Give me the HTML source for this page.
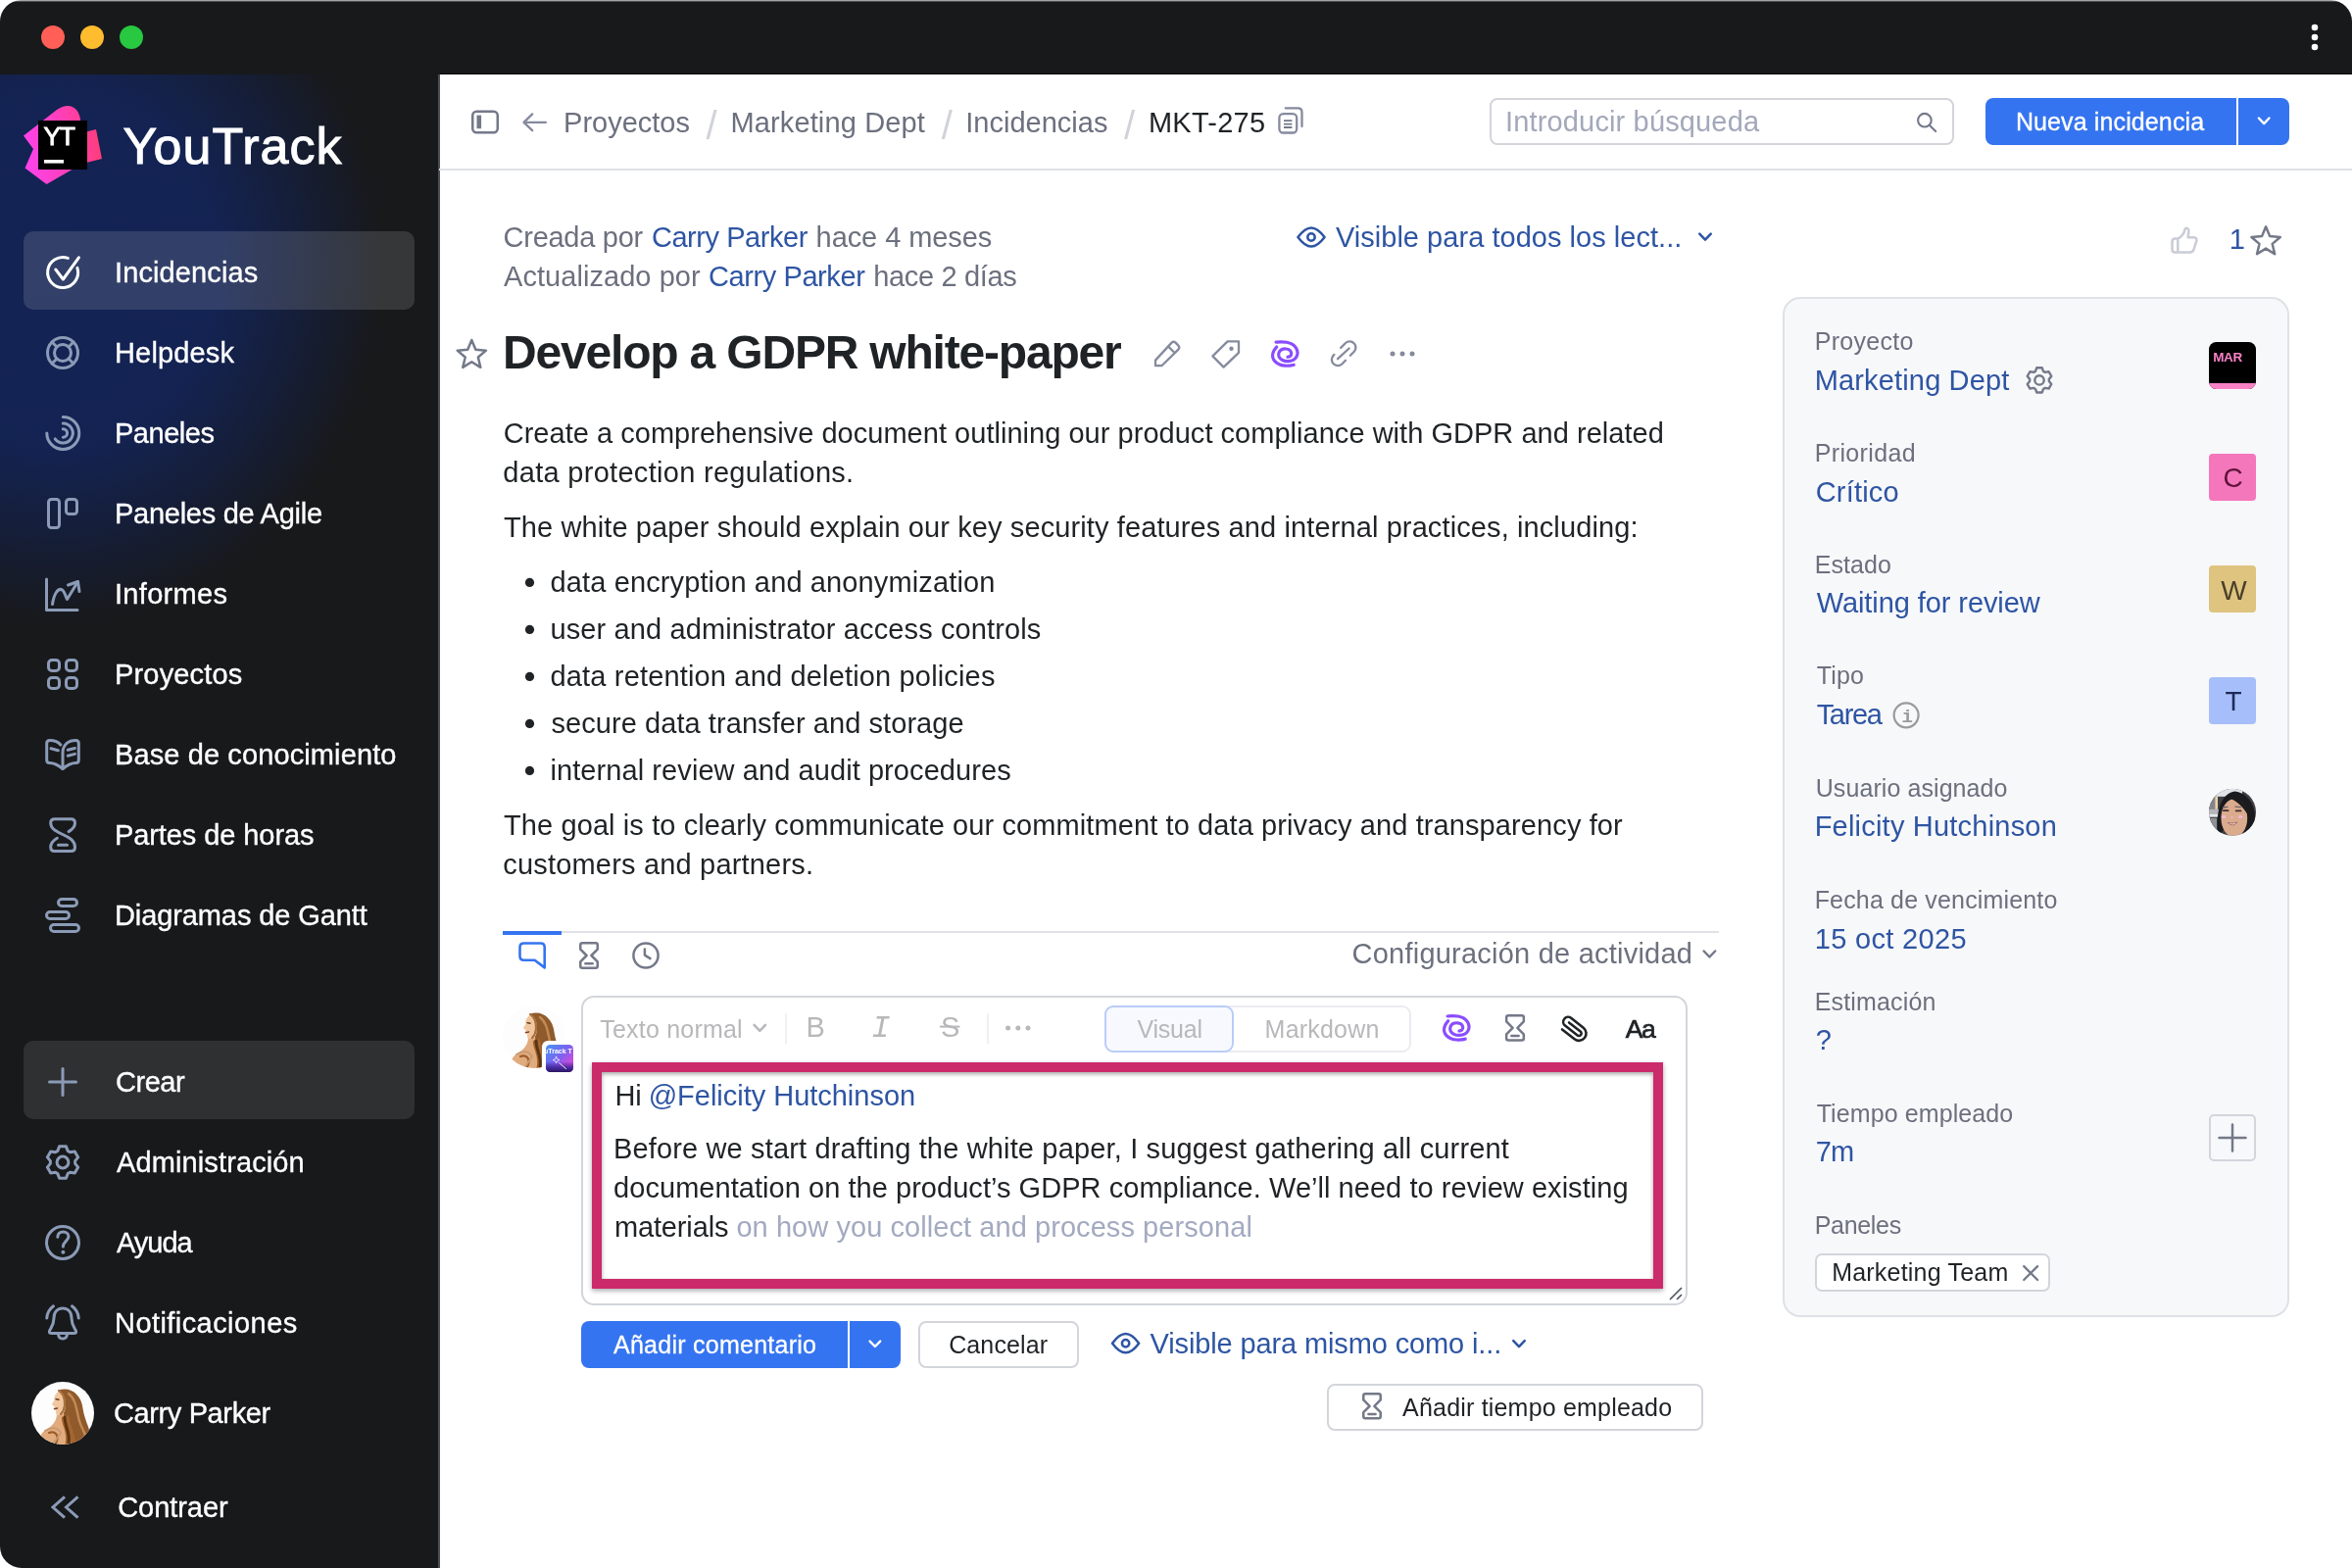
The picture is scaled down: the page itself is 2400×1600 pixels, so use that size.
<!DOCTYPE html>
<html lang="es">
<head>
<meta charset="utf-8">
<title>MKT-275 Develop a GDPR white-paper — YouTrack</title>
<style>
*{box-sizing:border-box;margin:0;padding:0}
html,body{width:2400px;height:1600px;overflow:hidden;background:#fff}
body{font-family:"Liberation Sans",Arial,sans-serif;position:relative;color:#1f2326}
.abs{position:absolute}
.txt{position:absolute;left:0;top:0;width:2400px;height:1600px;will-change:transform}
.t{position:absolute;white-space:nowrap;line-height:1;display:block}
svg{position:absolute;overflow:visible}
.win{position:absolute;left:0;top:0;width:2400px;height:1600px;border-radius:22px 22px 22px 22px;overflow:hidden;background:#fff}
.titlebar{position:absolute;left:0;top:0;width:2400px;height:76px;background:linear-gradient(to bottom,#a3a4a6 0,#a3a4a6 1px,#4d4e50 1px,#4d4e50 2px,#18191b 2px)}
.tl{position:absolute;top:26px;width:24px;height:24px;border-radius:50%}
.side{position:absolute;left:0;top:76px;width:448px;height:1524px;background:#18191b;overflow:hidden}
.sidegrad{position:absolute;left:0;top:0;width:448px;height:900px;background:radial-gradient(ellipse 335px 365px at 55px 196px,rgba(19,35,84,1) 0%,rgba(19,35,84,.97) 50%,rgba(19,35,84,.5) 76%,rgba(19,35,84,0) 100%)}
.sideedge{position:absolute;left:447px;top:76px;width:2px;height:1524px;background:#4c4e55}
.navsel{position:absolute;left:24px;width:399px;height:80px;border-radius:10px}
.hdrline{position:absolute;left:448px;top:172px;width:1952px;height:2px;background:#dfe1e6}
.btn{position:absolute;border-radius:8px}
.blue{background:#3574f0}
.obtn{position:absolute;border:2px solid #d3d5db;border-radius:8px;background:#fff}
a{color:#2e55a3;text-decoration:none}
</style>
</head>
<body>
<div class="win">
<!-- window title bar -->
<div class="titlebar"></div>
<div class="tl" style="left:42px;background:#ff5f57"></div>
<div class="tl" style="left:82px;background:#febc2e"></div>
<div class="tl" style="left:122px;background:#28c840"></div>
<svg style="left:2352px;top:20px" width="20" height="36" viewBox="0 0 20 36"><circle cx="10" cy="8" r="3.3" fill="#fff"/><circle cx="10" cy="18" r="3.3" fill="#fff"/><circle cx="10" cy="28" r="3.3" fill="#fff"/></svg>

<!-- sidebar -->
<div class="side"><div class="sidegrad"></div></div>
<div class="sideedge"></div>
<div class="navsel" style="top:236px;background:rgba(255,255,255,.135)"></div>
<div class="navsel" style="top:1062px;background:rgba(255,255,255,.1)"></div>

<!-- logo -->
<svg style="left:20px;top:100px" width="92" height="96" viewBox="20 100 92 96">
  <defs><linearGradient id="lg1" x1="24" y1="150" x2="104" y2="140" gradientUnits="userSpaceOnUse"><stop offset="0" stop-color="#fb43ec"/><stop offset=".55" stop-color="#ff3fb4"/><stop offset="1" stop-color="#ff3d78"/></linearGradient></defs>
  <path d="M24 138.5 L58 112 Q70 104 78 112 Q83 118 82 128 L82 136 L98 132 L104 162 L84 167 L47.5 188 L25.5 171.5 L34 152 Z" fill="url(#lg1)"/>
  <rect x="39" y="123" width="50" height="50" fill="#000"/>
  <rect x="45" y="163" width="20" height="3.6" fill="#fff"/>
</svg>
<!-- header -->
<div class="abs" style="left:449px;top:75px;width:1951px;height:1px;background:#08090a"></div>
<div class="hdrline"></div>
<div class="abs" style="left:1520px;top:100px;width:474px;height:48px;border:2px solid #d3d5db;border-radius:8px;background:#fff"></div>
<div class="btn blue" style="left:2026px;top:100px;width:256px;height:48px;border-radius:8px 0 0 8px"></div>
<div class="btn blue" style="left:2284px;top:100px;width:52px;height:48px;border-radius:0 8px 8px 0"></div>

<!-- right panel -->
<div class="abs" style="left:1819px;top:303px;width:517px;height:1041px;border:2px solid #dfe1e6;border-radius:18px;background:#f7f8fa"></div>
<div class="abs" style="left:2254px;top:349px;width:48px;height:48px;border-radius:7.5px;background:#000;overflow:hidden"><div class="abs" style="left:0;top:42px;width:48px;height:6px;background:#fb81c5"></div></div>
<div class="abs" style="left:2254px;top:463px;width:48px;height:48px;border-radius:4px;background:#f476bb"></div>
<div class="abs" style="left:2254px;top:577px;width:48px;height:48px;border-radius:4px;background:#dfc47f"></div>
<div class="abs" style="left:2254px;top:691px;width:48px;height:48px;border-radius:4px;background:#a6bef9"></div>
<div class="abs" style="left:2254px;top:1137px;width:48px;height:48px;border:2px solid #d3d5db;border-radius:5px;background:#f7f8fa"></div>
<div class="abs" style="left:1852px;top:1279px;width:240px;height:39px;border:2px solid #d3d5db;border-radius:7px;background:#fff"></div>

<!-- activity -->
<div class="abs" style="left:513px;top:950px;width:1241px;height:2px;background:#dfe1e6"></div>
<div class="abs" style="left:513px;top:950px;width:60px;height:4px;background:#3574f0"></div>

<!-- editor -->
<div class="abs" style="left:593px;top:1016px;width:1129px;height:316px;border:2px solid #d3d5db;border-radius:13px;background:#fff"></div>
<div class="abs" style="left:801px;top:1034px;width:2px;height:31px;background:#eff0f3"></div>
<div class="abs" style="left:1007px;top:1034px;width:2px;height:31px;background:#eff0f3"></div>
<div class="abs" style="left:1127px;top:1026px;width:313px;height:48px;border:2px solid #ebecf0;border-radius:9px;background:#fff"></div>
<div class="abs" style="left:1127px;top:1026px;width:132px;height:48px;border:2px solid #b9cdf9;border-radius:9px;background:#f7f9ff"></div>
<div class="abs" style="left:604px;top:1084px;width:1093px;height:231px;border:10px solid #cc2b6b;box-shadow:0 2px 5px rgba(0,0,0,.34), inset 0 2px 4px rgba(0,0,0,.36);background:#fff"></div>

<!-- buttons -->
<div class="btn blue" style="left:593px;top:1348px;width:272px;height:48px;border-radius:8px 0 0 8px"></div>
<div class="btn blue" style="left:867px;top:1348px;width:52px;height:48px;border-radius:0 8px 8px 0"></div>
<div class="obtn" style="left:937px;top:1348px;width:164px;height:48px"></div>
<div class="obtn" style="left:1354px;top:1412px;width:384px;height:48px"></div>
<svg style="left:0;top:0" width="460" height="1600" viewBox="0 0 460 1600" fill="none" stroke="#8b9bb7" stroke-width="3" stroke-linecap="round" stroke-linejoin="round">
<g stroke="#fff"><path d="M69.3 263.4 A15.5 15.5 0 1 0 78.9 273.4"/><path d="M56.8 275 L64.4 285 L80.4 262.8"/></g>
<circle cx="64" cy="360" r="15.5"/><circle cx="64" cy="360" r="8.5"/>
<path d="M70.00 366.00 L74.96 370.96"/>
<path d="M70.00 354.00 L74.96 349.04"/>
<path d="M58.00 366.00 L53.04 370.96"/>
<path d="M58.00 354.00 L53.04 349.04"/>
<path d="M64.3 425.5 A16.5 16.5 0 1 1 47.8 442"/><path d="M64.3 432 A10 10 0 1 1 56.2 447.9"/><path d="M64.3 437.7 A4.3 4.3 0 0 1 64.3 446.3" />
<rect x="49.5" y="509.5" width="11" height="29" rx="3"/><rect x="67.5" y="509.5" width="11" height="15" rx="3"/>
<path d="M47.5 591 V622.5 H79"/><path d="M53.5 616.5 C55 606 59 600.5 62.5 601.5 C66 602.5 66.5 608 68.5 611.5 L79.5 593.5"/><path d="M69.5 597 L79.5 593.5 L81 603.5"/>
<rect x="49.5" y="673.5" width="11" height="11" rx="3.5"/>
<rect x="49.5" y="691.5" width="11" height="11" rx="3.5"/>
<rect x="67.5" y="673.5" width="11" height="11" rx="3.5"/>
<rect x="67.5" y="691.5" width="11" height="11" rx="3.5"/>
<path d="M64 784.5 C58 779.5 53 778.5 50.7 778.5 Q47.7 778.5 47.7 775.5 V758.5 Q47.7 755.5 50.7 755.5 C55.5 755.5 59.5 757 61.8 760"/>
<path d="M64 784.5 C70 779.5 75 778.5 77.3 778.5 Q80.3 778.5 80.3 775.5 V758.5 Q80.3 755.5 77.3 755.5 C70 755.5 64 759.5 64 768 V784.5"/>
<path d="M52 763.8 L59.3 765.8 M69.2 765.3 L76.4 763.5 M69.2 771.2 L76.4 769.4"/>
<path d="M76.5 864.5 C76.5 857 70 854.5 64 851.5 C58 848.5 51.7 846 51.7 839.7 Q51.7 835.7 55.7 835.7 H72.5 Q76.5 835.7 76.5 839.7 C76.5 844 73.5 846.5 70 848.6"/>
<path d="M76.5 864.5 Q76.5 868.5 72.5 868.5 H55.7 Q51.7 868.5 51.7 864.5 C51.7 860 54.5 857.5 58.3 855.3"/><path d="M59.5 862.3 H68.5"/>
<rect x="59.5" y="917.5" width="19" height="7" rx="3.5"/><rect x="47.5" y="930.5" width="23" height="7" rx="3.5"/><rect x="51.5" y="943.5" width="29" height="7" rx="3.5"/>
<path d="M64 1090.5 V1117.5 M50.5 1104 H77.5"/>
<path d="M60.57 1169.86 L67.43 1169.86 L69.17 1174.40 L71.46 1175.73 L76.26 1174.96 L79.69 1180.90 L76.63 1184.67 L76.63 1187.33 L79.69 1191.10 L76.26 1197.04 L71.46 1196.27 L69.17 1197.60 L67.43 1202.14 L60.57 1202.14 L58.83 1197.60 L56.54 1196.27 L51.74 1197.04 L48.31 1191.10 L51.37 1187.33 L51.37 1184.67 L48.31 1180.90 L51.74 1174.96 L56.54 1175.73 L58.83 1174.40 Z"/><circle cx="64" cy="1186" r="5.9"/>
<circle cx="64" cy="1268" r="16.5"/><path d="M58.8 1262.3 C58.8 1258.5 61.5 1256.9 64.4 1256.9 C67.6 1256.9 70 1258.9 70 1261.8 C70 1266 64.4 1267 64.4 1272"/><circle cx="64.4" cy="1277.8" r="2" fill="#8b9bb7" stroke="none"/>
<path d="M55 1345 C55 1338.5 59 1335 64 1335 C69 1335 73 1338.5 73 1345 C73 1351 75 1353.5 77 1357 Q79 1360.5 75.5 1360.5 H52.5 Q49 1360.5 51 1357 C53 1353.5 55 1351 55 1345 Z"/>
<path d="M59.5 1361.5 C60 1367.5 68 1367.5 68.5 1361.5"/><path d="M54.5 1332.8 C50.5 1335.8 48 1340 47.8 1345"/><path d="M73.5 1332.8 C77.5 1335.8 80 1340 80.2 1345"/>
<path stroke-linecap="butt" stroke-linejoin="miter" d="M66 1527.3 L54 1538 L66 1548.7 M79.5 1527.3 L67.5 1538 L79.5 1548.7"/>
</svg>
<svg style="left:0;top:0" width="2400" height="1600" viewBox="0 0 2400 1600" fill="none" stroke-linecap="round" stroke-linejoin="round">
<rect x="482.25" y="113.75" width="25.5" height="21.5" rx="4" stroke="#747989" stroke-width="2.5"/><rect x="486.5" y="117.6" width="4.6" height="13.6" fill="#747989"/>
<path d="M557 124.8 H534.8 M543.2 116.4 L534.5 124.8 L543.2 133.2" stroke="#858a9d" stroke-width="2.3"/>
<rect x="1305.4" y="116.2" width="17.8" height="19.3" rx="4" stroke="#858a9d" stroke-width="2.3"/>
<path d="M1311.8 110.4 H1324.5 Q1328.5 110.4 1328.5 114.4 V129" stroke="#858a9d" stroke-width="2.3"/>
<path d="M1310 123.2 H1318.4 M1310 126.6 H1318.4 M1310 130 H1318.4" stroke="#747989" stroke-width="1.8" stroke-linecap="butt"/>
<circle cx="1963.9" cy="122.7" r="6.8" stroke="#747989" stroke-width="2.1"/><path d="M1968.8 127.7 L1975.2 134" stroke="#747989" stroke-width="2.1"/>
<path d="M2304.90 120.50 L2310.20 126.10 L2315.50 120.50" stroke="#fff" stroke-width="2.4"/>
<path d="M887.60 1368.60 L892.90 1374.00 L898.20 1368.60" stroke="#fff" stroke-width="2.4"/>
<path d="M1324.40 242.00 C1329.57 235.09 1333.92 232.40 1338.00 232.40 C1342.08 232.40 1346.43 235.09 1351.60 242.00 C1346.43 248.91 1342.08 251.60 1338.00 251.60 C1333.92 251.60 1329.57 248.91 1324.40 242.00 Z" stroke="#2e55a3" stroke-width="2.5"/><circle cx="1338.00" cy="242.00" r="3.7" stroke="#2e55a3" stroke-width="2.5"/>
<path d="M1734.25 238.60 L1740.00 244.60 L1745.75 238.60" stroke="#2e55a3" stroke-width="2.5"/>
<path d="M1135.00 1370.70 C1140.17 1363.79 1144.52 1361.10 1148.60 1361.10 C1152.68 1361.10 1157.03 1363.79 1162.20 1370.70 C1157.03 1377.61 1152.68 1380.30 1148.60 1380.30 C1144.52 1380.30 1140.17 1377.61 1135.00 1370.70 Z" stroke="#2e55a3" stroke-width="2.5"/><circle cx="1148.60" cy="1370.70" r="3.7" stroke="#2e55a3" stroke-width="2.5"/>
<path d="M1544.25 1368.20 L1550.00 1374.20 L1555.75 1368.20" stroke="#2e55a3" stroke-width="2.5"/>
<path d="M2222.3 243.6 C2226.5 241 2228.8 237.6 2229.4 234.4 Q2229.9 232.6 2231.6 232.9 Q2233.6 233.4 2233.4 236.2 L2232.6 242.2 H2238.6 Q2242 242.4 2241.3 245.8 L2238.6 254.4 Q2237.6 257.5 2234.4 257.5 H2219.6 Q2216.5 257.5 2216.5 254.4 V246.7 Q2216.5 243.6 2219.6 243.6 Z M2222.3 243.6 V257.5" stroke="#c9ccd6" stroke-width="2.5"/>
<path d="M2312.10 231.30 L2316.16 241.12 L2326.75 241.94 L2318.66 248.83 L2321.15 259.16 L2312.10 253.60 L2303.05 259.16 L2305.54 248.83 L2297.45 241.94 L2308.04 241.12 Z" stroke="#747989" stroke-width="2.5" stroke-linejoin="round"/>
<path d="M481.30 347.00 L485.36 356.82 L495.95 357.64 L487.86 364.53 L490.35 374.86 L481.30 369.30 L472.25 374.86 L474.74 364.53 L466.65 357.64 L477.24 356.82 Z" stroke="#747989" stroke-width="2.5" stroke-linejoin="round"/>
<path d="M1179 373.2 V367.6 L1195.6 349.6 Q1197.6 347.8 1199.6 349.6 L1202.4 352.6 Q1204.2 354.6 1202.4 356.6 L1185.4 373.2 Z M1192 353.4 L1198.6 360" stroke="#858a9d" stroke-width="2.3"/>
<path d="M1252.6 348.4 H1264 V359.8 L1248.6 374.6 L1237.4 363.4 Z" stroke="#858a9d" stroke-width="2.3"/><circle cx="1256.5" cy="355.8" r="2.2" fill="#858a9d"/>
<path d="M1302.07 349.20 C1302.94 349.14 1305.48 348.83 1307.28 348.83 C1309.08 348.83 1311.00 348.82 1312.86 349.20 C1314.72 349.59 1316.83 350.16 1318.44 351.16 C1320.05 352.15 1321.60 353.70 1322.53 355.15 C1323.46 356.61 1323.96 358.39 1324.02 359.90 C1324.08 361.40 1323.63 362.94 1322.90 364.18 C1322.18 365.42 1321.09 366.61 1319.65 367.34 C1318.21 368.07 1316.08 368.52 1314.26 368.55 C1312.43 368.58 1310.19 368.25 1308.67 367.52 C1307.16 366.80 1305.75 365.48 1305.14 364.18 C1304.54 362.87 1304.63 360.95 1305.05 359.71 C1305.47 358.47 1306.47 357.36 1307.65 356.74 C1308.83 356.12 1310.72 355.90 1312.12 355.99 C1313.51 356.08 1315.09 356.55 1316.02 357.29 C1316.95 358.04 1317.60 359.43 1317.70 360.46 C1317.79 361.48 1317.20 362.81 1316.58 363.43 C1315.96 364.05 1314.41 364.05 1313.98 364.18" stroke="#8a4dff" stroke-width="3.2"/><path d="M1302.72 353.95 C1302.24 354.61 1300.54 356.46 1299.84 357.94 C1299.14 359.43 1298.57 361.35 1298.54 362.87 C1298.51 364.39 1298.96 365.82 1299.65 367.06 C1300.35 368.30 1301.53 369.43 1302.72 370.31 C1303.92 371.20 1305.36 371.88 1306.82 372.36 C1308.27 372.84 1309.91 373.07 1311.46 373.20 C1313.01 373.32 1314.66 373.24 1316.12 373.10 C1317.57 372.96 1319.53 372.48 1320.21 372.36" stroke="#8a4dff" stroke-width="3.2"/>
<path d="M1477.07 1037.00 C1477.94 1036.94 1480.48 1036.63 1482.28 1036.63 C1484.08 1036.63 1486.00 1036.62 1487.86 1037.00 C1489.72 1037.39 1491.83 1037.96 1493.44 1038.96 C1495.05 1039.95 1496.60 1041.50 1497.53 1042.95 C1498.46 1044.41 1498.96 1046.19 1499.02 1047.70 C1499.08 1049.20 1498.63 1050.74 1497.90 1051.98 C1497.18 1053.22 1496.09 1054.41 1494.65 1055.14 C1493.21 1055.87 1491.08 1056.32 1489.26 1056.35 C1487.43 1056.38 1485.19 1056.05 1483.67 1055.32 C1482.16 1054.60 1480.75 1053.28 1480.14 1051.98 C1479.54 1050.67 1479.63 1048.75 1480.05 1047.51 C1480.47 1046.27 1481.47 1045.16 1482.65 1044.54 C1483.83 1043.92 1485.72 1043.70 1487.12 1043.79 C1488.51 1043.88 1490.09 1044.35 1491.02 1045.09 C1491.95 1045.84 1492.60 1047.23 1492.70 1048.26 C1492.79 1049.28 1492.20 1050.61 1491.58 1051.23 C1490.96 1051.85 1489.41 1051.85 1488.98 1051.98" stroke="#8a4dff" stroke-width="3.2"/><path d="M1477.72 1041.75 C1477.24 1042.41 1475.54 1044.26 1474.84 1045.74 C1474.14 1047.23 1473.57 1049.15 1473.54 1050.67 C1473.51 1052.19 1473.96 1053.62 1474.65 1054.86 C1475.35 1056.10 1476.53 1057.23 1477.72 1058.11 C1478.92 1059.00 1480.36 1059.68 1481.82 1060.16 C1483.27 1060.64 1484.91 1060.87 1486.46 1061.00 C1488.01 1061.12 1489.66 1061.04 1491.12 1060.90 C1492.57 1060.76 1494.53 1060.28 1495.21 1060.16" stroke="#8a4dff" stroke-width="3.2"/>
<path d="M1368.21 354.82 L1373.02 350.02 A6.20 6.20 0 0 1 1381.78 358.78 L1377.82 362.74" stroke="#858a9d" stroke-width="2.3"/>
<path d="M1361.36 361.87 L1360.52 362.72 A6.20 6.20 0 0 0 1369.28 371.48 L1372.96 367.81" stroke="#858a9d" stroke-width="2.3"/>
<path d="M1365 366.2 L1376.6 355.5" stroke="#858a9d" stroke-width="2.3"/>
<circle cx="1421" cy="361" r="2.5" fill="#858a9d"/>
<circle cx="1431" cy="361" r="2.5" fill="#858a9d"/>
<circle cx="1441" cy="361" r="2.5" fill="#858a9d"/>
<circle cx="540.5" cy="594.4" r="4.6" fill="#1f2326"/>
<circle cx="540.5" cy="642.4" r="4.6" fill="#1f2326"/>
<circle cx="540.5" cy="690.4" r="4.6" fill="#1f2326"/>
<circle cx="540.5" cy="738.4" r="4.6" fill="#1f2326"/>
<circle cx="540.5" cy="786.4" r="4.6" fill="#1f2326"/>
<path d="M534.5 962.5 H551.7 Q555.7 962.5 555.7 966.5 V987.4 L545.6 979.7 H534.5 Q530.5 979.7 530.5 975.7 V966.5 Q530.5 962.5 534.5 962.5 Z" stroke="#3574f0" stroke-width="2.6"/>
<path d="M594.25 962.35 H607.75 Q609.75 962.35 609.75 964.35 V968.55 L603.40 975.00 L609.75 981.45 V985.65 Q609.75 987.65 607.75 987.65 H594.25 Q592.25 987.65 592.25 985.65 V981.45 L598.60 975.00 L592.25 968.55 V964.35 Q592.25 962.35 594.25 962.35 Z" stroke="#747989" stroke-width="2.5" stroke-linejoin="round"/><path d="M597.40 983.25 H604.60" stroke="#747989" stroke-width="2.5"/>
<circle cx="659" cy="975" r="12.6" stroke="#747989" stroke-width="2.5"/><path d="M657.9 968.6 V974.6 L663.5 978.1" stroke="#747989" stroke-width="2.5"/>
<path d="M1738.65 970.50 L1744.40 976.50 L1750.15 970.50" stroke="#747989" stroke-width="2.5"/>
<path d="M769.55 1045.80 L775.30 1051.80 L781.05 1045.80" stroke="#b8b8bb" stroke-width="2.5"/>
<path d="M959 1047.6 H979.4" stroke="#b8b8bb" stroke-width="2" stroke-linecap="butt"/>
<circle cx="1028.6" cy="1049" r="2.5" fill="#b8b8bb"/>
<circle cx="1038.8" cy="1049" r="2.5" fill="#b8b8bb"/>
<circle cx="1049" cy="1049" r="2.5" fill="#b8b8bb"/>
<path d="M1539.15 1036.25 H1552.85 Q1554.85 1036.25 1554.85 1038.25 V1042.42 L1548.40 1048.85 L1554.85 1055.28 V1059.45 Q1554.85 1061.45 1552.85 1061.45 H1539.15 Q1537.15 1061.45 1537.15 1059.45 V1055.28 L1543.60 1048.85 L1537.15 1042.42 V1038.25 Q1537.15 1036.25 1539.15 1036.25 Z" stroke="#747989" stroke-width="2.5" stroke-linejoin="round"/><path d="M1542.40 1057.05 H1549.60" stroke="#747989" stroke-width="2.5"/>
<g transform="translate(1606,1049.8) rotate(-7) scale(-1.23,1.23) translate(-11.7,-11.7)"><path d="M21.44 11.05l-9.19 9.19a6 6 0 0 1-8.49-8.49l9.19-9.19a4 4 0 0 1 5.66 5.66l-9.2 9.19a2 2 0 0 1-2.83-2.83l8.49-8.48" stroke="#1f2326" stroke-width="2.1"/></g>
<path d="M1704 1326 L1716 1314 M1711 1326 L1716 1321" stroke="#4d5160" stroke-width="1.6" stroke-linecap="butt"/>
<path d="M1393.25 1422.35 H1406.75 Q1408.75 1422.35 1408.75 1424.35 V1428.47 L1402.40 1434.85 L1408.75 1441.22 V1445.35 Q1408.75 1447.35 1406.75 1447.35 H1393.25 Q1391.25 1447.35 1391.25 1445.35 V1441.22 L1397.60 1434.85 L1391.25 1428.47 V1424.35 Q1391.25 1422.35 1393.25 1422.35 Z" stroke="#747989" stroke-width="2.5" stroke-linejoin="round"/><path d="M1396.40 1442.95 H1403.60" stroke="#747989" stroke-width="2.5"/>
<path d="M2078.32 375.28 L2083.68 375.28 L2085.03 378.86 L2086.82 379.89 L2090.59 379.27 L2093.27 383.91 L2090.85 386.87 L2090.85 388.93 L2093.27 391.89 L2090.59 396.53 L2086.82 395.91 L2085.03 396.94 L2083.68 400.52 L2078.32 400.52 L2076.97 396.94 L2075.18 395.91 L2071.41 396.53 L2068.73 391.89 L2071.15 388.93 L2071.15 386.87 L2068.73 383.91 L2071.41 379.27 L2075.18 379.89 L2076.97 378.86 Z" stroke="#747989" stroke-width="2.4"/><circle cx="2081" cy="387.9" r="4.7" stroke="#747989" stroke-width="2.4"/>
<circle cx="1945.1" cy="729.8" r="12.5" stroke="#9a9a9a" stroke-width="2.2"/>
<path d="M2278 1147.5 V1174.5 M2264.5 1161 H2291.5" stroke="#747989" stroke-width="2.5"/>
<path d="M2065.2 1292.1 L2079.1 1306 M2079.1 1292.1 L2065.2 1306" stroke="#747989" stroke-width="2.3"/>
<clipPath id="cp1"><circle cx="64" cy="1442" r="32"/></clipPath><g clip-path="url(#cp1)"><g transform="translate(0,0)"><rect x="30" y="1408" width="68" height="68" fill="#fdfdfe"/><path d="M58 1443 C58 1450 53 1456 44 1461 L36 1472 L46 1480 L84 1480 L86 1466 C76 1460 68 1452 67 1442 Z" fill="#e2ab7d"/><path d="M60 1418.5 C72 1414.5 83 1423 84.5 1437 C86 1448 91 1456 93 1466 L80 1476 L68 1472 C72 1462 66 1452 65 1442 C64.5 1432 64 1424 60 1418.5 Z" fill="#8f5a2c"/><path d="M70 1422 C78 1428 78 1440 81 1450 C83 1457 87 1462 88 1468" stroke="#c48a55" stroke-width="2.4" fill="none"/><path d="M63 1446 C62 1454 70 1460 66 1476 L78 1478 C78 1466 72 1456 70 1444 Z" fill="#a5652e"/><path d="M50 1462 C56 1460 60 1464 58 1470 C57 1474 54 1476 52 1480" stroke="#9a5c2a" stroke-width="2.2" fill="none"/><path d="M66 1446 C66 1456 72 1462 70 1472" stroke="#5c3514" stroke-width="3" fill="none"/><path d="M61.5 1419.5 C57 1420.5 54.8 1425 55.4 1429 L52.8 1433 L55.4 1435 L55 1438 L57 1439.6 L57.2 1443 C60 1445.4 64 1443.4 66 1440 C68.4 1432 66.4 1423 61.5 1419.5 Z" fill="#f1c7a0"/><path d="M60 1419 C64 1421 66.5 1427 66 1434 C65.6 1438 64 1441 62 1443" stroke="#a8703c" stroke-width="2.2" fill="none"/><path d="M57 1427.6 L60 1428.2" stroke="#5c3514" stroke-width="1.4"/><path d="M55.4 1437.6 L58.6 1437" stroke="#7a3b2a" stroke-width="1.4"/><path d="M46 1460 C52 1456 58 1456 62 1462 C58 1468 54 1474 50 1480" stroke="#c99a70" stroke-width="2" fill="none"/></g></g>
<clipPath id="cp2"><circle cx="545" cy="1058" r="32"/></clipPath><g clip-path="url(#cp2)"><g transform="translate(481,-384)"><rect x="30" y="1408" width="68" height="68" fill="#fdfdfe"/><path d="M58 1443 C58 1450 53 1456 44 1461 L36 1472 L46 1480 L84 1480 L86 1466 C76 1460 68 1452 67 1442 Z" fill="#e2ab7d"/><path d="M60 1418.5 C72 1414.5 83 1423 84.5 1437 C86 1448 91 1456 93 1466 L80 1476 L68 1472 C72 1462 66 1452 65 1442 C64.5 1432 64 1424 60 1418.5 Z" fill="#8f5a2c"/><path d="M70 1422 C78 1428 78 1440 81 1450 C83 1457 87 1462 88 1468" stroke="#c48a55" stroke-width="2.4" fill="none"/><path d="M63 1446 C62 1454 70 1460 66 1476 L78 1478 C78 1466 72 1456 70 1444 Z" fill="#a5652e"/><path d="M50 1462 C56 1460 60 1464 58 1470 C57 1474 54 1476 52 1480" stroke="#9a5c2a" stroke-width="2.2" fill="none"/><path d="M66 1446 C66 1456 72 1462 70 1472" stroke="#5c3514" stroke-width="3" fill="none"/><path d="M61.5 1419.5 C57 1420.5 54.8 1425 55.4 1429 L52.8 1433 L55.4 1435 L55 1438 L57 1439.6 L57.2 1443 C60 1445.4 64 1443.4 66 1440 C68.4 1432 66.4 1423 61.5 1419.5 Z" fill="#f1c7a0"/><path d="M60 1419 C64 1421 66.5 1427 66 1434 C65.6 1438 64 1441 62 1443" stroke="#a8703c" stroke-width="2.2" fill="none"/><path d="M57 1427.6 L60 1428.2" stroke="#5c3514" stroke-width="1.4"/><path d="M55.4 1437.6 L58.6 1437" stroke="#7a3b2a" stroke-width="1.4"/><path d="M46 1460 C52 1456 58 1456 62 1462 C58 1468 54 1474 50 1480" stroke="#c99a70" stroke-width="2" fill="none"/></g></g>
<defs><linearGradient id="bg1" x1="0" y1="0" x2="1" y2="0.9"><stop offset="0.05" stop-color="#4b90f3"/><stop offset="0.5" stop-color="#7b62f0"/><stop offset="0.8" stop-color="#c44fe0"/></linearGradient><linearGradient id="bg2" x1="0" y1="0" x2="0" y2="1"><stop offset="0.62" stop-color="#2b1a7e" stop-opacity="0"/><stop offset="0.85" stop-color="#3a2392" stop-opacity=".9"/><stop offset="1" stop-color="#2b165f"/></linearGradient></defs><rect x="553" y="1062" width="36" height="36" rx="6" fill="#fff"/><rect x="557" y="1066" width="28" height="28" rx="4.5" fill="url(#bg1)"/><rect x="557" y="1066" width="28" height="28" rx="4.5" fill="url(#bg2)"/><path d="M567.6 1078.2 L568.6 1080.6 L571.0 1081.6 L568.6 1082.6 L567.6 1085.0 L566.6 1082.6 L564.2 1081.6 L566.6 1080.6 Z" fill="none" stroke="#fff" stroke-width="0.7"/><path d="M570.6 1084.6 L577.6 1090.6" stroke="#fff" stroke-width="0.9"/>
<clipPath id="fel"><circle cx="2278" cy="828.8" r="24"/></clipPath><g clip-path="url(#fel)"><rect x="2254" y="804.8" width="48" height="48" fill="#3f4044"/><rect x="2254" y="804.8" width="34" height="8" fill="#e1e3e8"/><rect x="2254" y="812.8" width="8" height="15" fill="#85868a"/><rect x="2260.4" y="812.8" width="2.6" height="13" fill="#ecd2aa"/><rect x="2254" y="825.8" width="12" height="4.5" fill="#b4b6bb"/><rect x="2254" y="830.3" width="12" height="3.4" fill="#e6e8ec"/><rect x="2254" y="834.8" width="8" height="12" fill="#8f9094"/><path d="M2263.5 854.8 C2261.0 834.8 2263.0 810.8 2280.0 807.4 C2294.0 808.8 2303.0 822.8 2301.0 840.8 L2298.0 854.8 L2290.0 854.8 C2282.0 838.8 2272.0 838.8 2263.5 854.8 Z" fill="#1b1b1e"/><ellipse cx="2279.8" cy="834.8" rx="13.4" ry="19.5" fill="#dbab8e"/><path d="M2272.0 814.2 C2280.0 811.3 2290.0 814.8 2294.4 832.8 C2290.5 825.8 2285.0 818.8 2277.0 815.2 C2275.0 815.2 2273.0 814.8 2272.0 814.2 Z" fill="#1b1b1e"/><path d="M2273.0 814.2 C2269.0 816.8 2266.0 822.8 2265.6 831.8 L2267.6 822.8 Z" fill="#1b1b1e"/><path d="M2268.8 827.2 h4.8 M2281.6 827.4 h5" stroke="#3f3230" stroke-width="1.7" stroke-linecap="round"/><path d="M2268.4 824.0 l4.6 -0.6 M2281.0 823.2 l5.4 0.4" stroke="#6b6468" stroke-width="1.3"/><ellipse cx="2269.2" cy="833.4" rx="2.3" ry="1.6" fill="#f2b8d2"/><ellipse cx="2286.2" cy="833.4" rx="2.3" ry="1.6" fill="#f2b8d2"/><ellipse cx="2277.4" cy="834.1999999999999" rx="1.4" ry="0.9" fill="#efb3c8"/><path d="M2273.4 839.6 Q2278.0 841.0 2283.0 839.0 Q2278.4 844.8 2273.4 839.6 Z" fill="#eef0f0" stroke="#a5655c" stroke-width="0.9"/></g>
</svg>
<div class="txt">
<span class="t" style="left:44.50px;top:125.50px;font-size:26px;color:#ffffff;letter-spacing:-0.942px;-webkit-text-stroke:.9px #fff;">YT</span>
<span class="t" style="left:125.60px;top:122.60px;font-size:52px;color:#ffffff;letter-spacing:1.026px;-webkit-text-stroke:1px #fff;">YouTrack</span>
<span class="t" style="left:117.00px;top:263.50px;font-size:29px;color:#ffffff;letter-spacing:0.112px;-webkit-text-stroke:.35px #fff;">Incidencias</span>
<span class="t" style="left:117.00px;top:345.50px;font-size:29px;color:#ffffff;letter-spacing:0.157px;-webkit-text-stroke:.35px #fff;">Helpdesk</span>
<span class="t" style="left:117.00px;top:427.50px;font-size:29px;color:#ffffff;letter-spacing:-0.483px;-webkit-text-stroke:.35px #fff;">Paneles</span>
<span class="t" style="left:117.00px;top:509.50px;font-size:29px;color:#ffffff;letter-spacing:-0.268px;-webkit-text-stroke:.35px #fff;">Paneles de Agile</span>
<span class="t" style="left:117.00px;top:591.50px;font-size:29px;color:#ffffff;letter-spacing:0.312px;-webkit-text-stroke:.35px #fff;">Informes</span>
<span class="t" style="left:117.00px;top:673.50px;font-size:29px;color:#ffffff;letter-spacing:0.170px;-webkit-text-stroke:.35px #fff;">Proyectos</span>
<span class="t" style="left:117.00px;top:755.50px;font-size:29px;color:#ffffff;letter-spacing:0.110px;-webkit-text-stroke:.35px #fff;">Base de conocimiento</span>
<span class="t" style="left:117.00px;top:837.50px;font-size:29px;color:#ffffff;letter-spacing:-0.088px;-webkit-text-stroke:.35px #fff;">Partes de horas</span>
<span class="t" style="left:117.00px;top:919.50px;font-size:29px;color:#ffffff;letter-spacing:-0.103px;-webkit-text-stroke:.35px #fff;">Diagramas de Gantt</span>
<span class="t" style="left:118.00px;top:1089.50px;font-size:29px;color:#ffffff;letter-spacing:-0.464px;-webkit-text-stroke:.35px #fff;">Crear</span>
<span class="t" style="left:119.00px;top:1171.50px;font-size:29px;color:#ffffff;letter-spacing:0.119px;-webkit-text-stroke:.35px #fff;">Administración</span>
<span class="t" style="left:119.00px;top:1253.50px;font-size:29px;color:#ffffff;letter-spacing:-1.019px;-webkit-text-stroke:.35px #fff;">Ayuda</span>
<span class="t" style="left:117.00px;top:1335.50px;font-size:29px;color:#ffffff;letter-spacing:0.436px;-webkit-text-stroke:.35px #fff;">Notificaciones</span>
<span class="t" style="left:116.00px;top:1428.00px;font-size:29px;color:#ffffff;letter-spacing:-0.382px;-webkit-text-stroke:.35px #fff;">Carry Parker</span>
<span class="t" style="left:120.20px;top:1523.50px;font-size:29px;color:#ffffff;letter-spacing:-0.053px;-webkit-text-stroke:.35px #fff;">Contraer</span>
<span class="t" style="left:575.10px;top:110.50px;font-size:29px;color:#6c707e;letter-spacing:-0.018px;">Proyectos</span>
<span class="t" style="left:720.60px;top:107.70px;font-size:40px;color:#d1d3da;">/</span>
<span class="t" style="left:745.40px;top:110.50px;font-size:29px;color:#6c707e;letter-spacing:0.140px;">Marketing Dept</span>
<span class="t" style="left:960.80px;top:107.70px;font-size:40px;color:#d1d3da;">/</span>
<span class="t" style="left:985.30px;top:110.50px;font-size:29px;color:#6c707e;letter-spacing:0.002px;">Incidencias</span>
<span class="t" style="left:1147.00px;top:107.70px;font-size:40px;color:#d1d3da;">/</span>
<span class="t" style="left:1171.90px;top:110.50px;font-size:29px;color:#1f2326;letter-spacing:0.245px;">MKT-275</span>
<span class="t" style="left:1536.10px;top:109.50px;font-size:29px;color:#a3a8ba;letter-spacing:0.144px;">Introducir búsqueda</span>
<span class="t" style="left:2056.90px;top:112.30px;font-size:25px;color:#ffffff;letter-spacing:0.121px;-webkit-text-stroke:.3px #fff;">Nueva incidencia</span>
<span class="t" style="left:513.60px;top:227.50px;font-size:29px;color:#6c707e;letter-spacing:-0.281px;">Creada por</span>
<span class="t" style="left:664.90px;top:227.50px;font-size:29px;color:#2e55a3;letter-spacing:-0.436px;"><a>Carry Parker</a></span>
<span class="t" style="left:832.60px;top:227.50px;font-size:29px;color:#6c707e;letter-spacing:-0.077px;">hace 4 meses</span>
<span class="t" style="left:514.00px;top:267.50px;font-size:29px;color:#6c707e;letter-spacing:0.054px;">Actualizado por</span>
<span class="t" style="left:722.90px;top:267.50px;font-size:29px;color:#2e55a3;letter-spacing:-0.400px;"><a>Carry Parker</a></span>
<span class="t" style="left:891.20px;top:267.50px;font-size:29px;color:#6c707e;letter-spacing:-0.334px;">hace 2 días</span>
<span class="t" style="left:1362.90px;top:227.90px;font-size:29px;color:#2e55a3;letter-spacing:0.033px;">Visible para todos los lect...</span>
<span class="t" style="left:2274.70px;top:230.40px;font-size:29px;color:#2e55a3;">1</span>
<span class="t" style="left:513.10px;top:335.50px;font-size:48px;color:#1f2326;letter-spacing:-1.192px;font-weight:700;">Develop a GDPR white-paper</span>
<span class="t" style="left:513.70px;top:427.50px;font-size:29px;color:#1f2326;letter-spacing:0.030px;">Create a comprehensive document outlining our product compliance with GDPR and related</span>
<span class="t" style="left:513.30px;top:467.50px;font-size:29px;color:#1f2326;letter-spacing:0.297px;">data protection regulations.</span>
<span class="t" style="left:514.00px;top:523.50px;font-size:29px;color:#1f2326;letter-spacing:0.108px;">The white paper should explain our key security features and internal practices, including:</span>
<span class="t" style="left:561.50px;top:579.50px;font-size:29px;color:#1f2326;letter-spacing:0.126px;">data encryption and anonymization</span>
<span class="t" style="left:561.50px;top:627.50px;font-size:29px;color:#1f2326;letter-spacing:0.118px;">user and administrator access controls</span>
<span class="t" style="left:561.50px;top:675.50px;font-size:29px;color:#1f2326;letter-spacing:0.163px;">data retention and deletion policies</span>
<span class="t" style="left:562.50px;top:723.50px;font-size:29px;color:#1f2326;letter-spacing:0.064px;">secure data transfer and storage</span>
<span class="t" style="left:561.50px;top:771.50px;font-size:29px;color:#1f2326;letter-spacing:0.077px;">internal review and audit procedures</span>
<span class="t" style="left:514.00px;top:827.50px;font-size:29px;color:#1f2326;letter-spacing:0.101px;">The goal is to clearly communicate our commitment to data privacy and transparency for</span>
<span class="t" style="left:513.30px;top:867.50px;font-size:29px;color:#1f2326;letter-spacing:0.180px;">customers and partners.</span>
<span class="t" style="left:1379.60px;top:959.10px;font-size:29px;color:#6c707e;letter-spacing:0.222px;">Configuración de actividad</span>
<span class="t" style="left:612.20px;top:1037.90px;font-size:25px;color:#b8b8bb;letter-spacing:0.213px;">Texto normal</span>
<span class="t" style="left:822.50px;top:1033.90px;font-size:29px;color:#b8b8bb;">B</span>
<span class="t" style="left:889.20px;top:1033.90px;font-size:32px;color:#b8b8bb;font-style:italic;font-family:'Liberation Mono';">I</span>
<span class="t" style="left:960.00px;top:1033.90px;font-size:29px;color:#b8b8bb;">S</span>
<span class="t" style="left:1160.40px;top:1037.90px;font-size:25px;color:#b8b8bb;letter-spacing:-0.197px;">Visual</span>
<span class="t" style="left:1290.60px;top:1037.90px;font-size:25px;color:#b8b8bb;letter-spacing:0.212px;">Markdown</span>
<span class="t" style="left:1658.80px;top:1036.55px;font-size:26.5px;color:#1f2326;letter-spacing:-1.475px;-webkit-text-stroke:.7px #1f2326;">Aa</span>
<span class="t" style="left:627.40px;top:1103.50px;font-size:29px;color:#1f2326;">Hi</span>
<span class="t" style="left:661.70px;top:1103.50px;font-size:29px;color:#2e55a3;letter-spacing:-0.020px;"><a>@Felicity Hutchinson</a></span>
<span class="t" style="left:625.90px;top:1157.50px;font-size:29px;color:#1f2326;letter-spacing:0.156px;">Before we start drafting the white paper, I suggest gathering all current</span>
<span class="t" style="left:626.10px;top:1197.50px;font-size:29px;color:#1f2326;letter-spacing:0.043px;">documentation on the product’s GDPR compliance. We’ll need to review existing</span>
<span class="t" style="left:626.90px;top:1237.50px;font-size:29px;color:#1f2326;letter-spacing:-0.130px;">materials</span>
<span class="t" style="left:751.40px;top:1237.50px;font-size:29px;color:#a3aac0;letter-spacing:0.066px;">on how you collect and process personal</span>
<span class="t" style="left:626.00px;top:1359.90px;font-size:25px;color:#ffffff;letter-spacing:0.258px;-webkit-text-stroke:.3px #fff;">Añadir comentario</span>
<span class="t" style="left:968.20px;top:1359.50px;font-size:25px;color:#1f2326;letter-spacing:0.111px;">Cancelar</span>
<span class="t" style="left:1173.50px;top:1356.50px;font-size:29px;color:#2e55a3;letter-spacing:-0.123px;">Visible para mismo como i...</span>
<span class="t" style="left:1431.10px;top:1423.50px;font-size:25px;color:#1f2326;letter-spacing:0.191px;">Añadir tiempo empleado</span>
<span class="t" style="left:1851.70px;top:335.50px;font-size:25px;color:#6c707e;letter-spacing:0.292px;">Proyecto</span>
<span class="t" style="left:1851.70px;top:373.90px;font-size:29px;color:#2e55a3;letter-spacing:0.155px;">Marketing Dept</span>
<span class="t" style="left:1851.70px;top:449.60px;font-size:25px;color:#6c707e;letter-spacing:0.357px;">Prioridad</span>
<span class="t" style="left:1852.70px;top:487.80px;font-size:29px;color:#2e55a3;letter-spacing:0.190px;">Crítico</span>
<span class="t" style="left:1851.70px;top:563.50px;font-size:25px;color:#6c707e;letter-spacing:0.094px;">Estado</span>
<span class="t" style="left:1853.70px;top:601.00px;font-size:29px;color:#2e55a3;letter-spacing:-0.079px;">Waiting for review</span>
<span class="t" style="left:1853.70px;top:677.30px;font-size:25px;color:#6c707e;letter-spacing:0.200px;">Tipo</span>
<span class="t" style="left:1853.70px;top:715.10px;font-size:29px;color:#2e55a3;letter-spacing:-1.329px;">Tarea</span>
<span class="t" style="left:1852.70px;top:792.20px;font-size:25px;color:#6c707e;letter-spacing:0.082px;">Usuario asignado</span>
<span class="t" style="left:1851.70px;top:829.00px;font-size:29px;color:#2e55a3;letter-spacing:0.209px;">Felicity Hutchinson</span>
<span class="t" style="left:1851.70px;top:905.80px;font-size:25px;color:#6c707e;letter-spacing:0.164px;">Fecha de vencimiento</span>
<span class="t" style="left:1851.70px;top:943.80px;font-size:29px;color:#2e55a3;letter-spacing:0.336px;">15 oct 2025</span>
<span class="t" style="left:1851.70px;top:1009.90px;font-size:25px;color:#6c707e;letter-spacing:0.160px;">Estimación</span>
<span class="t" style="left:1852.70px;top:1047.10px;font-size:29px;color:#2e55a3;">?</span>
<span class="t" style="left:1853.70px;top:1124.00px;font-size:25px;color:#6c707e;letter-spacing:0.094px;">Tiempo empleado</span>
<span class="t" style="left:1852.70px;top:1161.20px;font-size:29px;color:#2e55a3;letter-spacing:-0.728px;">7m</span>
<span class="t" style="left:1851.70px;top:1237.60px;font-size:25px;color:#6c707e;letter-spacing:-0.307px;">Paneles</span>
<span class="t" style="left:1869.20px;top:1285.50px;font-size:25px;color:#1f2326;letter-spacing:0.206px;">Marketing Team</span>
<span class="t" style="left:2258.20px;top:358.45px;font-size:13.5px;color:#fa80c8;letter-spacing:-0.347px;font-weight:700;">MAR</span>
<span class="t" style="left:2268.40px;top:474.40px;font-size:28px;color:#5c1238;">C</span>
<span class="t" style="left:2266.20px;top:588.50px;font-size:28px;color:#4a3f2a;">W</span>
<span class="t" style="left:2270.60px;top:702.40px;font-size:28px;color:#1d2a5a;">T</span>
<span class="t" style="left:1940.60px;top:722.70px;font-size:19px;color:#9a9a9a;font-weight:700;font-family:'Liberation Mono';">i</span>
<span class="t" style="left:555.00px;top:1068.50px;font-size:7px;color:#ffffff;font-weight:700;">uTrack T</span>
</div>
</div>
</body>
</html>
